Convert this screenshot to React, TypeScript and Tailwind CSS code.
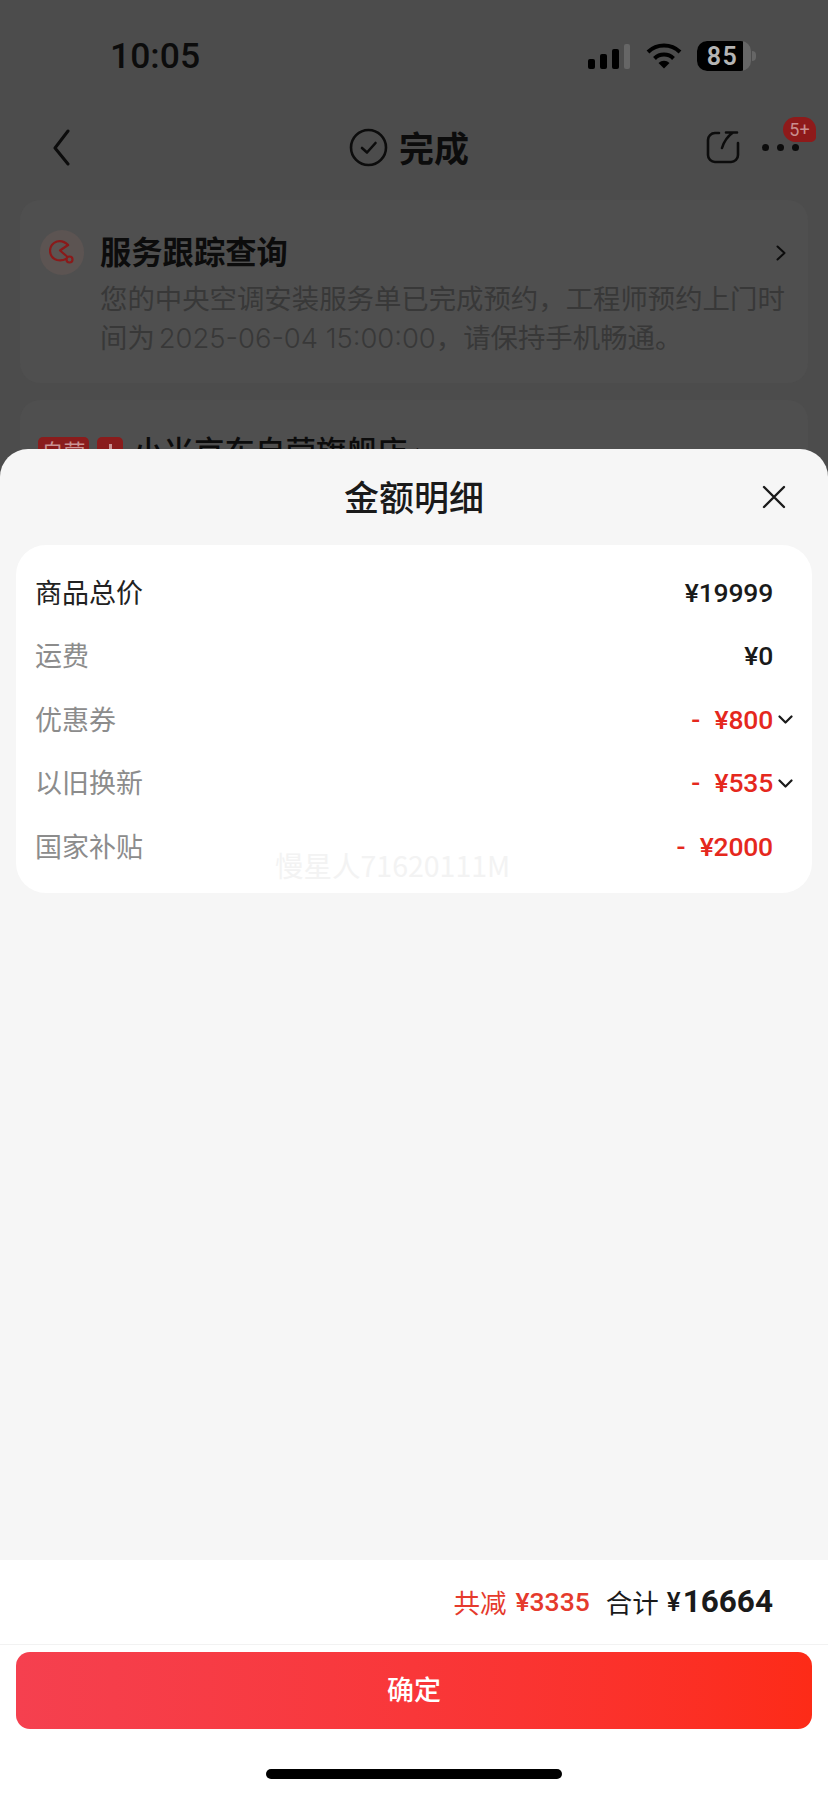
const rows = [
  { label: '优惠券', value: '- ¥800', more: true },
  { label: '以旧换新', value: '- ¥535', more: true },
  { label: '国家补贴', value: '- ¥2000', more: false },
]

const cjk = "font-['Noto_Sans_CJK_SC',sans-serif]"
const num = "font-['Roboto','Noto_Sans_CJK_SC',sans-serif]"

function StatusBar() {
  return (
    <div className="flex h-[112px] items-center justify-between pl-[110px] pr-[72px]">
      <span className={`${num} pt-[2px] text-[35.5px] font-medium text-[#0c0c0c]`}>10:05</span>
      <div className="flex items-center">
        <div className="flex h-[26px] items-end gap-[5px]">
          <div className="h-[10px] w-[7px] rounded-[2px] bg-black" />
          <div className="h-[15px] w-[7px] rounded-[2px] bg-black" />
          <div className="h-[20px] w-[7px] rounded-[2px] bg-black" />
          <div className="h-[25px] w-[6px] rounded-[2px] bg-[#666666]" />
        </div>
        <svg className="ml-[16px]" width="36" height="26" viewBox="0 0 36 26" fill="none" stroke="black" strokeWidth="4">
          <path d="M2 9 A23 23 0 0 1 34 9" />
          <path d="M8.5 15.5 A13.5 13.5 0 0 1 27.5 15.5" />
          <path d="M18 25.5 L12.5 20 A8 8 0 0 1 23.5 20 Z" fill="black" stroke="none" />
        </svg>
        <div className="relative ml-[15px] flex h-[30px] w-[54px] items-center overflow-hidden rounded-[10px] bg-[#666666]">
          <div className="flex h-full w-[46px] items-center justify-center bg-black pl-[5px]">
            <span className={`${num} text-[25px] font-semibold leading-none tracking-[1.5px] text-[#b4b4b4]`}>85</span>
          </div>
        </div>
        <div className="ml-[1px] h-[10px] w-[4px] rounded-r-full bg-[#666666]" />
      </div>
    </div>
  )
}

function NavBar() {
  return (
    <div className="flex h-[70px] items-center justify-between pl-[52px] pr-[29px]">
      <svg width="18" height="37" viewBox="0 0 18 37" fill="none" stroke="#0c0c0c" strokeWidth="3" strokeLinecap="round" strokeLinejoin="round">
        <path d="M16 2 L3 19 L16 35" />
      </svg>
      <div className="ml-[279px] flex items-center gap-[11px]">
        <svg width="39" height="39" viewBox="0 0 39 39" fill="none" stroke="#0c0c0c" strokeWidth="2.6" strokeLinecap="round" strokeLinejoin="round">
          <circle cx="19.5" cy="19.5" r="17.5" />
          <path d="M13 20 L18 24.5 L26.5 15" />
        </svg>
        <span className={`${cjk} mt-[-2px] text-[35px] font-bold leading-none text-[#0c0c0c]`}>完成</span>
      </div>
      <div className="ml-auto flex items-center gap-[22px]">
        <svg width="34" height="34" viewBox="0 0 34 34" fill="none" stroke="#0c0c0c" strokeWidth="2.6" strokeLinecap="round" strokeLinejoin="round">
          <path d="M13 3 H9 A7 7 0 0 0 2 10 V25 A7 7 0 0 0 9 32 H25 A7 7 0 0 0 32 25 V13" />
          <path d="M16 18 Q19 8 27 2.5 M20 2.5 H31" />
        </svg>
        <div className="relative flex items-center gap-[8px]">
          <div className="h-[7px] w-[7px] rounded-full bg-[#0c0c0c]" />
          <div className="h-[7px] w-[7px] rounded-full bg-[#0c0c0c]" />
          <div className="h-[7px] w-[7px] rounded-full bg-[#0c0c0c]" />
          <div className={`${num} absolute left-[21px] top-[-27px] flex h-[25px] w-[33px] items-center justify-center rounded-[13px] rounded-br-[5px] bg-[#8e1a1a] text-[18px] text-[#c98f8f]`}>
            5+
          </div>
        </div>
      </div>
    </div>
  )
}

function BackPage() {
  return (
    <div className="h-[477px] overflow-hidden">
      <StatusBar />
      <NavBar />
      <div className="mx-[20px] mt-[18px] h-[183px] rounded-[20px] bg-[#4f4f4f] pl-[20px] pr-[22px] pt-[30px]">
        <div className="flex gap-[16px]">
          <div className="flex h-[45px] w-[44px] shrink-0 items-center justify-center rounded-full bg-[#5c5452]">
            <svg width="26" height="26" viewBox="0 0 26 26" fill="none" stroke="#8a1a1a" strokeWidth="2.2" strokeLinejoin="round" strokeLinecap="round">
              <path d="M19 5 Q14 0 8 1.5 Q1 4 1 11 Q1.5 18 8 20 Q13 21 17 19" />
              <path d="M19 5 L11 10.5 L17.5 16" />
              <circle cx="20.5" cy="19.5" r="3" />
            </svg>
          </div>
          <div className="min-w-0 flex-1">
            <div className="flex h-[46px] items-center justify-between">
              <span className={`${cjk} mt-[-3px] text-[31.3px] font-bold text-[#0c0c0c]`}>服务跟踪查询</span>
              <svg width="10" height="16" viewBox="0 0 10 16" fill="none" stroke="#0c0c0c" strokeWidth="2" strokeLinecap="round" strokeLinejoin="round">
                <path d="M1.5 1.5 L8.5 8 L1.5 14.5" />
              </svg>
            </div>
            <div className={`${cjk} mt-[2px] whitespace-nowrap text-[27.4px] leading-[39px] text-[#383838]`}>
              <div>您的中央空调安装服务单已完成预约，工程师预约上门时</div>
              <div>
                间为<span className="ml-[4px] font-['Inter',sans-serif] font-light">2025-06-04 15:00:00</span>，请保持手机畅通。
              </div>
            </div>
          </div>
        </div>
      </div>
      <div className="mx-[20px] mt-[17px] h-[200px] rounded-[20px] bg-[#4f4f4f] pl-[18px] pt-[37px]">
        <div className="flex items-start">
          <div className={`${cjk} flex h-[26px] w-[51px] items-center justify-center rounded-[5px] bg-[#8a1c1c] text-[22px] leading-none text-[#c99393]`}>
            自营
          </div>
          <div className="ml-[8px] flex h-[26px] w-[26px] justify-center rounded-[5px] bg-[#8a1c1c] pt-[7px]">
            <div className="h-[10px] w-[3px] bg-[#c99393]" />
          </div>
          <span className={`${cjk} ml-[10px] mt-[-7px] whitespace-nowrap text-[30.5px] font-medium leading-[40px] text-[#0c0c0c]`}>
            小米京东自营旗舰店 ›
          </span>
        </div>
      </div>
    </div>
  )
}

function Amount({ children, red, more }: { children: string; red?: boolean; more?: boolean }) {
  return (
    <div className="flex items-center">
      <span className={`${num} text-[26.5px] font-medium tracking-[-0.2px] [word-spacing:8px] ${red ? 'text-[#e5281d]' : 'text-[#1a1a1a]'}`}>
        {children}
      </span>
      <div className="flex w-[20px] justify-end">
        {more && (
          <svg width="15" height="9" viewBox="0 0 15 9" fill="none" stroke="#1a1a1a" strokeWidth="2.2" strokeLinecap="round" strokeLinejoin="round">
            <path d="M1.5 1.5 L7.5 7.5 L13.5 1.5" />
          </svg>
        )}
      </div>
    </div>
  )
}

function Sheet() {
  return (
    <div className="relative mt-[-28px] flex h-[1346px] flex-col overflow-hidden rounded-t-[28px] bg-[#f6f6f6]">
      <div className="grid h-[96px] grid-cols-[1fr_auto_1fr] items-center">
        <div />
        <span className={`${cjk} mt-[-2px] text-[35px] font-medium text-[#1a1a1a]`}>金额明细</span>
        <div className="flex justify-end pr-[42px]">
          <svg width="24" height="24" viewBox="0 0 24 24" fill="none" stroke="#1a1a1a" strokeWidth="2.4" strokeLinecap="round">
            <path d="M2 2 L22 22 M22 2 L2 22" />
          </svg>
        </div>
      </div>
      <div className="relative mx-[16px] h-[348px] rounded-[30px] bg-white pb-[14px] pl-[19px] pr-[19px] pt-[16px]">
        <div className="flex h-[63.5px] items-center justify-between">
          <span className={`${cjk} pb-[2px] text-[27px] text-[#222222]`}>商品总价</span>
          <Amount>¥19999</Amount>
        </div>
        <div className="flex h-[63.5px] items-center justify-between">
          <span className={`${cjk} pb-[2px] text-[27px] text-[#8c8c8c]`}>运费</span>
          <Amount>¥0</Amount>
        </div>
        {rows.map((row) => (
          <div key={row.label} className="flex h-[63.5px] items-center justify-between">
            <span className={`${cjk} pb-[2px] text-[27px] text-[#8c8c8c]`}>{row.label}</span>
            <Amount red more={row.more}>{row.value}</Amount>
          </div>
        ))}
        <span className={`${cjk} absolute left-[259px] top-[306px] whitespace-nowrap text-[28.5px] leading-none text-[#f3f3f3]`}>
          慢星人71620111M
        </span>
      </div>
      <div className="flex-1" />
      <div className="bg-white">
        <div className="flex h-[85px] items-center justify-end border-b border-[#f2f2f2] pr-[55px]">
          <span className={`${cjk} text-[26.5px] text-[#e53a2c]`}>共减</span>
          <span className={`${num} ml-[9px] text-[26.5px] font-medium text-[#e53a2c]`}>¥3335</span>
          <span className={`${cjk} ml-[16px] text-[26.5px] text-[#1a1a1a]`}>合计</span>
          <span className={`${num} ml-[8px] text-[26px] font-medium text-[#1a1a1a]`}>¥</span>
          <span className={`${num} ml-[2px] text-[31.5px] font-bold text-[#1a1a1a]`}>16664</span>
        </div>
        <div className="px-[16px] pt-[7px]">
          <div className={`${cjk} flex h-[77px] items-center justify-center rounded-[14px] bg-gradient-to-r from-[#f5404f] to-[#fd2b17] pb-[2px] text-[27px] font-medium text-white`}>
            确定
          </div>
        </div>
        <div className="flex justify-center pb-[16px] pt-[40px]">
          <div className="h-[10px] w-[296px] rounded-full bg-black" />
        </div>
      </div>
    </div>
  )
}

export default function App() {
  return (
    <div className="h-[1795px] w-[828px] overflow-hidden bg-[#4c4c4c]">
      <BackPage />
      <Sheet />
    </div>
  )
}
